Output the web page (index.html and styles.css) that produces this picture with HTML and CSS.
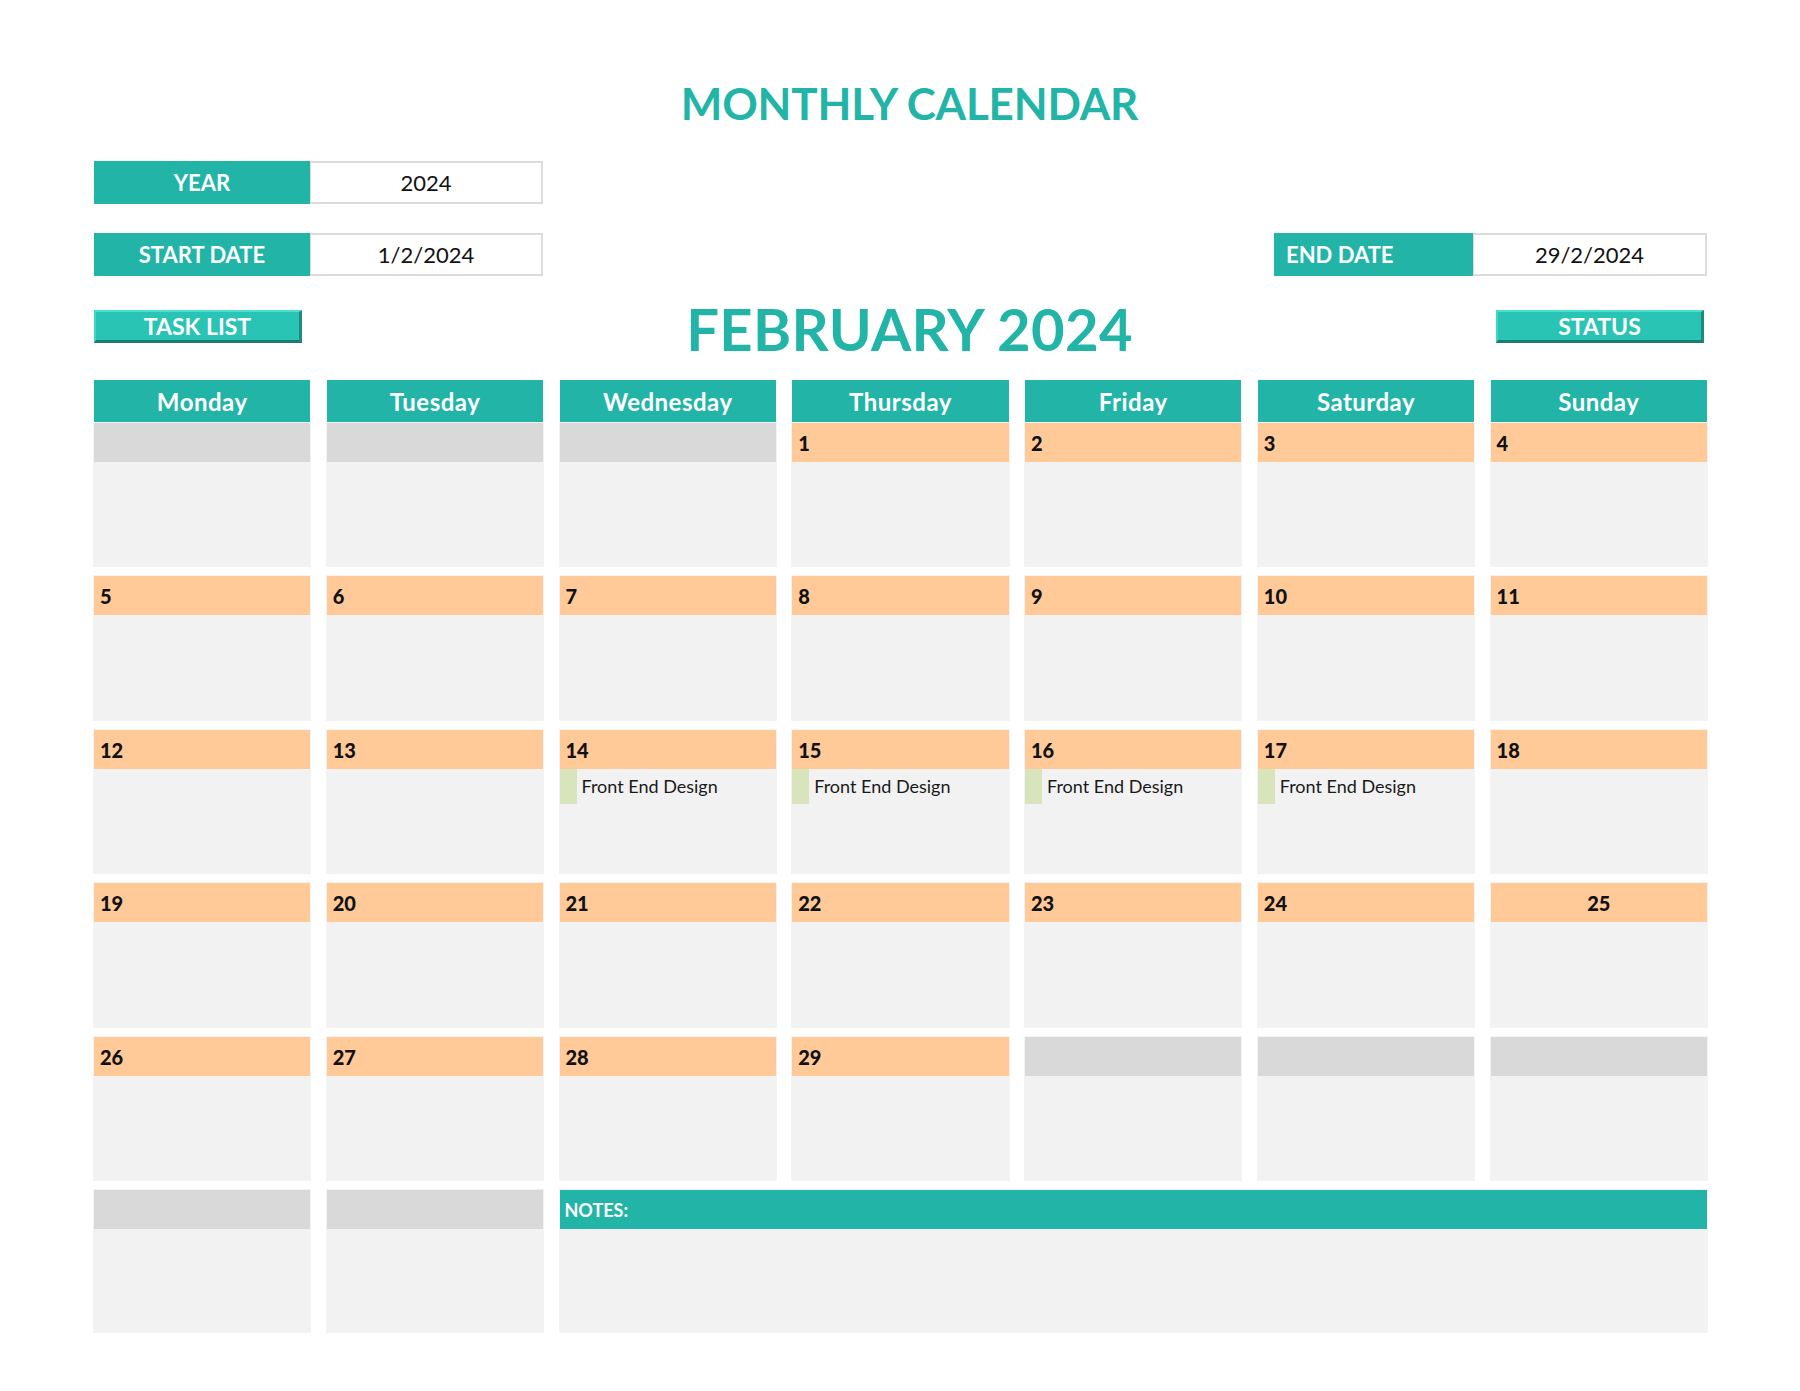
FILE: index.html
```html
<!DOCTYPE html>
<html>
<head>
<meta charset="utf-8">
<title>Monthly Calendar</title>
<link rel="stylesheet" href="styles.css">
</head>
<body>
<div class="page">
  <h1 class="title">MONTHLY CALENDAR</h1>

  <div class="info-row">
    <div class="field">
      <div class="field-label center">YEAR</div>
      <div class="field-value">2024</div>
    </div>
  </div>

  <div class="info-row row-start">
    <div class="field">
      <div class="field-label center">START DATE</div>
      <div class="field-value">1/2/2024</div>
    </div>
    <div class="field field-end">
      <div class="field-label left">END DATE</div>
      <div class="field-value">29/2/2024</div>
    </div>
  </div>

  <div class="heading-row">
    <div class="btn">TASK LIST</div>
    <div class="month">FEBRUARY 2024</div>
    <div class="btn btn-status">STATUS</div>
  </div>

  <div class="days">
    <div class="day">Monday</div>
    <div class="day">Tuesday</div>
    <div class="day">Wednesday</div>
    <div class="day">Thursday</div>
    <div class="day">Friday</div>
    <div class="day">Saturday</div>
    <div class="day">Sunday</div>
  </div>

  <div class="grid">
    <div class="cell empty"><div class="bar"></div><div class="body"></div></div>
    <div class="cell empty"><div class="bar"></div><div class="body"></div></div>
    <div class="cell empty"><div class="bar"></div><div class="body"></div></div>
    <div class="cell"><div class="bar">1</div><div class="body"></div></div>
    <div class="cell"><div class="bar">2</div><div class="body"></div></div>
    <div class="cell"><div class="bar">3</div><div class="body"></div></div>
    <div class="cell"><div class="bar">4</div><div class="body"></div></div>

    <div class="cell"><div class="bar">5</div><div class="body"></div></div>
    <div class="cell"><div class="bar">6</div><div class="body"></div></div>
    <div class="cell"><div class="bar">7</div><div class="body"></div></div>
    <div class="cell"><div class="bar">8</div><div class="body"></div></div>
    <div class="cell"><div class="bar">9</div><div class="body"></div></div>
    <div class="cell"><div class="bar">10</div><div class="body"></div></div>
    <div class="cell"><div class="bar">11</div><div class="body"></div></div>

    <div class="cell"><div class="bar">12</div><div class="body"></div></div>
    <div class="cell"><div class="bar">13</div><div class="body"></div></div>
    <div class="cell"><div class="bar">14</div><div class="body"><div class="task"><span class="task-mark"></span><span class="task-text">Front End Design</span></div></div></div>
    <div class="cell"><div class="bar">15</div><div class="body"><div class="task"><span class="task-mark"></span><span class="task-text">Front End Design</span></div></div></div>
    <div class="cell"><div class="bar">16</div><div class="body"><div class="task"><span class="task-mark"></span><span class="task-text">Front End Design</span></div></div></div>
    <div class="cell"><div class="bar">17</div><div class="body"><div class="task"><span class="task-mark"></span><span class="task-text">Front End Design</span></div></div></div>
    <div class="cell"><div class="bar">18</div><div class="body"></div></div>

    <div class="cell"><div class="bar">19</div><div class="body"></div></div>
    <div class="cell"><div class="bar">20</div><div class="body"></div></div>
    <div class="cell"><div class="bar">21</div><div class="body"></div></div>
    <div class="cell"><div class="bar">22</div><div class="body"></div></div>
    <div class="cell"><div class="bar">23</div><div class="body"></div></div>
    <div class="cell"><div class="bar">24</div><div class="body"></div></div>
    <div class="cell"><div class="bar bar-center">25</div><div class="body"></div></div>

    <div class="cell"><div class="bar">26</div><div class="body"></div></div>
    <div class="cell"><div class="bar">27</div><div class="body"></div></div>
    <div class="cell"><div class="bar">28</div><div class="body"></div></div>
    <div class="cell"><div class="bar">29</div><div class="body"></div></div>
    <div class="cell empty"><div class="bar"></div><div class="body"></div></div>
    <div class="cell empty"><div class="bar"></div><div class="body"></div></div>
    <div class="cell empty"><div class="bar"></div><div class="body"></div></div>

    <div class="cell empty"><div class="bar"></div><div class="body"></div></div>
    <div class="cell empty"><div class="bar"></div><div class="body"></div></div>
    <div class="cell notes"><div class="bar">NOTES:</div><div class="body"></div></div>
  </div>
</div>
</body>
</html>
```

FILE: styles.css
```css
html, body {
  margin: 0;
  padding: 0;
  background: #ffffff;
}

body {
  font-family: "Lato", "Open Sans", "Liberation Sans", sans-serif;
  color: #000;
}

.page {
  width: 1613px;
  padding: 0 93px 0 94px;
}

.title {
  margin: 0;
  padding-top: 80px;
  padding-left: 18px;
  height: 46px;
  line-height: 46px;
  font-size: 44px;
  font-weight: 700;
  color: #22b5a7;
  text-align: center;
  letter-spacing: -0.2px;
}

.info-row {
  display: flex;
  justify-content: space-between;
  margin-top: 35px;
}

.row-start {
  margin-top: 29px;
}

.field {
  display: flex;
  height: 43px;
}

.field-label {
  width: 216px;
  background: #22b5a7;
  color: #fff;
  font-weight: 700;
  font-size: 22px;
  line-height: 43px;
}

.field-label.center {
  text-align: center;
}

.field-label.left {
  padding-left: 12px;
  box-sizing: border-box;
}

.field-end .field-label {
  width: 199px;
}

.field-value {
  width: 233px;
  box-sizing: border-box;
  border: 2px solid #dcdcdc;
  border-left: 1px solid #dcdcdc;
  text-align: center;
  font-size: 22px;
  line-height: 39px;
  color: #111;
}

.field-end .field-value {
  width: 234px;
}

.heading-row {
  display: flex;
  justify-content: space-between;
  align-items: flex-start;
  margin-top: 20px;
  height: 62px;
  margin-bottom: 22px;
}

.btn {
  margin-top: 14px;
  width: 208px;
  height: 33px;
  box-sizing: border-box;
  background: #29c4b4;
  border-top: 2px solid #49e0d2;
  border-left: 2px solid #3ed6c7;
  border-bottom: 3px solid #1b7d72;
  border-right: 3px solid #1f8a7f;
  color: #fff;
  font-weight: 700;
  font-size: 23px;
  line-height: 28px;
  text-align: center;
}

.btn-status {
  margin-right: 3px;
}

.month {
  font-size: 58px;
  font-weight: 700;
  line-height: 62px;
  color: #22b5a7;
  letter-spacing: 0.3px;
  padding-top: 2px;
  margin-left: 21px;
}

.days {
  display: grid;
  grid-template-columns: repeat(7, 1fr);
  column-gap: 16.3px;
}

.day {
  height: 43px;
  background: #22b5a7;
  color: #fff;
  font-weight: 700;
  font-size: 24px;
  line-height: 43px;
  text-align: center;
  letter-spacing: 0.5px;
}

.grid {
  display: grid;
  grid-template-columns: repeat(7, 1fr);
  grid-auto-rows: 143.4px;
  column-gap: 16.3px;
  row-gap: 10px;
}

.cell {
  display: flex;
  flex-direction: column;
  box-shadow: 0 0 0 1px #f3f3f3;
}

.bar {
  height: 39px;
  flex: none;
  background: #ffca98;
  box-sizing: border-box;
  padding-left: 6px;
  font-weight: 900;
  font-size: 20px;
  line-height: 40px;
  color: #111;
}

.bar-center {
  text-align: center;
  padding-left: 0;
}

.body {
  flex: 1;
  background: #f2f2f2;
}

.empty .bar {
  background: #d9d9d9;
}

.notes {
  grid-column: span 5;
}

.notes .bar {
  background: #22b5a7;
  color: #fff;
  font-size: 18px;
  font-weight: 700;
  padding-left: 5px;
}

.task {
  display: flex;
  height: 35px;
  align-items: stretch;
}

.task-mark {
  width: 17px;
  background: #d8e4bc;
  flex: none;
}

.task-text {
  padding-left: 5px;
  font-size: 18px;
  line-height: 34px;
  color: #1a1a1a;
}
```
